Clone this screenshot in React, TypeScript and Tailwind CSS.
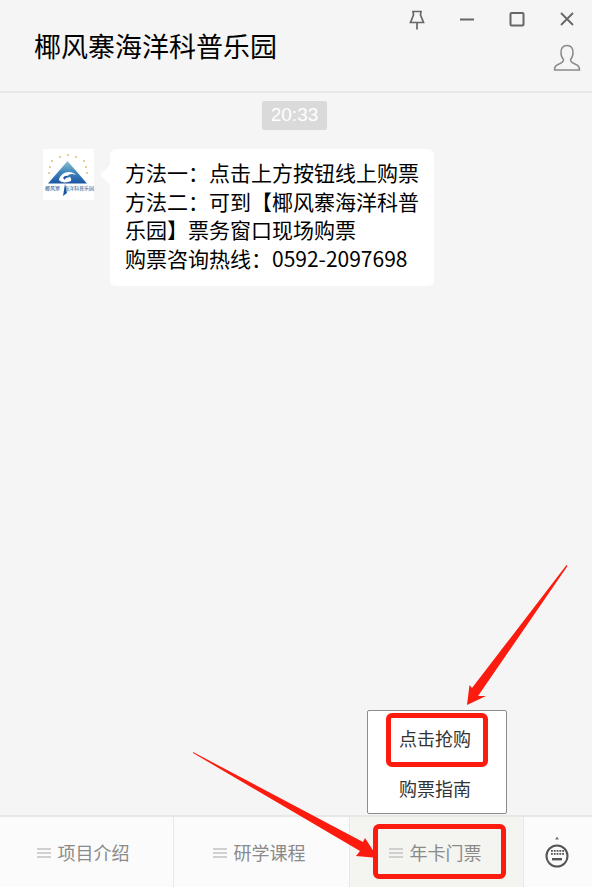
const cjk = { fontFamily: '"Noto Sans CJK SC", "Liberation Sans", sans-serif' };

function Logo() {
  const stars = [
    [25, 6], [17, 8], [33, 8], [9, 12], [41, 12], [7, 18], [43, 18], [6, 24], [44, 24],
  ];
  return (
    <div className="relative w-[51px] h-[51px] bg-white shrink-0 overflow-hidden">
      <svg viewBox="0 0 51 51" className="w-[51px] h-[51px] block">
        <defs>
          <linearGradient id="tri" x1="0" y1="0" x2="0" y2="1">
            <stop offset="0" stopColor="#8cc4d2" />
            <stop offset="0.5" stopColor="#3f86bb" />
            <stop offset="1" stopColor="#1c56a3" />
          </linearGradient>
        </defs>
        {stars.map(([x, y]) => (
          <circle key={`${x}-${y}`} cx={x} cy={y} r="0.9" fill="#dcb868" />
        ))}
        <path d="M24.5 12 L44 34.5 H5 Z" fill="url(#tri)" />
        <path d="M16 31 C17 24 27 20 33 26 C29 24 25 25 24 28 C27 27 29 29 28 32 C24 34 18 34 16 31 Z" fill="#fff" />
        <path d="M20 29 C22 26 25 26 26 29 C24 28 22 29 22 31 Z" fill="#1c56a3" />
        <path d="M22 35 L24 44 L20 47 Z" fill="#1c56a3" />
      </svg>
      <div className="absolute left-[2px] top-[35px] flex gap-[4px] text-[5px] leading-[7px] text-[#27548c] whitespace-nowrap">
        <span>椰风寨</span>
        <span>海洋科普乐园</span>
      </div>
    </div>
  );
}

function WindowButtons() {
  return (
    <div className="flex gap-[34px] text-[#666]">
      <svg width="16" height="20" viewBox="0 0 16 20" fill="none" stroke="currentColor" strokeWidth="1.7">
        <path d="M4 1.5 H12 L11.5 5 L14.5 12.5 H1.5 L4.5 5 Z M8 12.5 V19.5" />
      </svg>
      <svg width="16" height="20" viewBox="0 0 16 20" fill="none" stroke="currentColor" strokeWidth="2">
        <path d="M1 9.5 H15" />
      </svg>
      <svg width="16" height="20" viewBox="0 0 16 20" fill="none" stroke="currentColor" strokeWidth="2">
        <rect x="1.5" y="3" width="13" height="12.5" rx="1" />
      </svg>
      <svg width="16" height="20" viewBox="0 0 16 20" fill="none" stroke="currentColor" strokeWidth="1.8">
        <path d="M2 3 L14 15 M14 3 L2 15" />
      </svg>
    </div>
  );
}

function PersonIcon() {
  return (
    <svg width="28" height="28" viewBox="0 0 28 28" fill="none" stroke="#8a8a8a" strokeWidth="1.5">
      <path d="M14 1.5 C10 1.5 8 4.5 8 8.5 C8 12 9 14 10.5 15.5 C10.5 18 9 19 5 20.5 C2.5 21.5 1.5 23 1.5 26 H26.5 C26.5 23 25.5 21.5 23 20.5 C19 19 17.5 18 17.5 15.5 C19 14 20 12 20 8.5 C20 4.5 18 1.5 14 1.5 Z" />
    </svg>
  );
}

function KeyboardIcon() {
  return (
    <svg width="26" height="36" viewBox="0 0 26 36" fill="none">
      <circle cx="13" cy="22" r="10.5" stroke="#555" strokeWidth="2" />
      <path d="M13 2.5 L15 5.5 H11 Z" fill="#777" />
      {[7, 9.8, 12.6, 15.4, 18.2].map((x) => (
        <g key={x} fill="#555">
          <rect x={x} y="16" width="1.8" height="1.8" />
          <rect x={x} y="19" width="1.8" height="1.8" />
        </g>
      ))}
      <rect x="8" y="24" width="10" height="2.4" fill="#555" />
    </svg>
  );
}

function Tab({ label, active, className }: { label: string; active?: boolean; className: string }) {
  return (
    <div
      className={`${className} flex items-center justify-center border-r border-[#e8e8e8] ${
        active ? "bg-[#f4f4f0]" : ""
      }`}
    >
      <div className="flex flex-col gap-[2px] mt-[2px] mr-[7px]">
        <div className="w-[14px] h-[2px] bg-[#d0d0d0]" />
        <div className="w-[14px] h-[2px] bg-[#d0d0d0]" />
        <div className="w-[14px] h-[2px] bg-[#d0d0d0]" />
      </div>
      <span className="text-[18px] leading-6 text-[#8a8a8a]">{label}</span>
    </div>
  );
}

export default function App() {
  return (
    <div className="relative w-[592px] h-[887px] bg-[#f5f5f5] flex flex-col overflow-hidden" style={cjk}>
      <header className="h-[93px] shrink-0 border-b-2 border-[#e7e7e7] flex justify-between pl-[34px]">
        <h1 className="pt-[27px] text-[27px] leading-[38px] text-black font-normal">椰风寨海洋科普乐园</h1>
        <div className="flex flex-col items-end pt-[10px] pr-[17px]">
          <WindowButtons />
          <div className="mt-[14px] mr-[-6px]">
            <PersonIcon />
          </div>
        </div>
      </header>

      <main className="relative flex-1 flex flex-col">
        <div className="flex justify-center pt-[8px] pr-[3px]">
          <span
            className="h-[29px] w-[65px] flex items-center justify-center rounded-[2px] bg-[#dadada] text-white text-[19px]"
            style={{ fontFamily: '"Liberation Sans", sans-serif' }}
          >
            20:33
          </span>
        </div>
        <div className="flex items-start gap-[16px] pl-[43px] pt-[19px]">
          <Logo />
          <div className="relative w-[324px] bg-white rounded-[6px] px-[15px] pt-[9px] pb-[13px] text-[21px] leading-[28.7px] text-black">
            <div className="absolute left-[-7px] top-[19px] w-[14px] h-[14px] rotate-45 bg-white" />
            <p className="relative">
              {"方法一\uFF1A点击上方按钮线上购票"}
              <br />
              {"方法二\uFF1A可到【椰风寨海洋科普乐园】票务窗口现场购票"}
              <br />
              {"购票咨询热线\uFF1A0592-2097698"}
            </p>
          </div>
        </div>

        <div className="absolute right-[85px] bottom-[1px] w-[140px] h-[104px] bg-white border border-[#8c8c8c] rounded-[2px] flex flex-col items-center pt-[3px] pr-[4px] text-[18px] text-[#333]">
          <div className="h-[50px] flex items-center">点击抢购</div>
          <div className="h-[50px] flex items-center">购票指南</div>
        </div>
      </main>

      <footer className="h-[72px] shrink-0 border-t-2 border-[#e7e7e7] bg-[#fbfbfb] flex">
        <Tab label="项目介绍" className="w-[174px] pr-[7px]" />
        <Tab label="研学课程" className="w-[176px] pr-[5px]" />
        <Tab label="年卡门票" className="w-[174px] pr-[3px]" active />
        <div className="flex-1 flex items-center justify-center pr-[3px]">
          <KeyboardIcon />
        </div>
      </footer>

      {/* red annotations drawn over the screenshot */}
      <div className="absolute left-[386px] top-[713px] w-[102px] h-[54px] border-[5px] border-[#fb1b0f] rounded-[6px]" />
      <div className="absolute left-[373px] top-[824px] w-[133px] h-[55px] border-[5px] border-[#fb1b0f] rounded-[6px]" />
      <svg className="absolute left-0 top-0 pointer-events-none" width="592" height="887" viewBox="0 0 592 887">
        <path d="M567.5 566 L478 696 L486 696 L467 705 L469.5 685 L472 688 L566.5 565 Z" fill="#fb1b0f" />
        <path d="M193 752 L363 842 L365 838 L378 858 L356 856 L360 851 L193 753 Z" fill="#fb1b0f" />
      </svg>
    </div>
  );
}
